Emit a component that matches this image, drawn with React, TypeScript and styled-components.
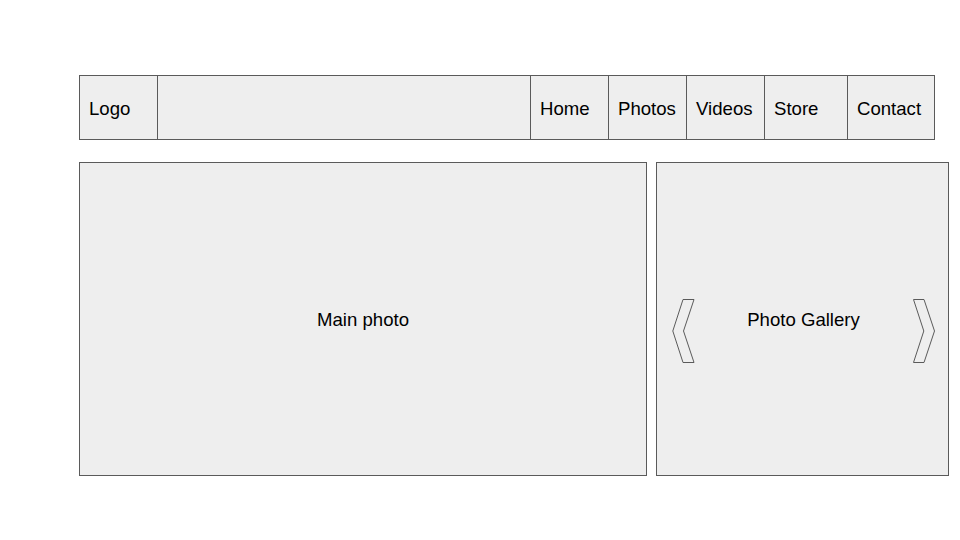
import React from "react";
import styled, { createGlobalStyle } from "styled-components";

const GlobalStyle = createGlobalStyle`
  html, body {
    margin: 0;
    padding: 0;
    background: #ffffff;
  }
  * { box-sizing: border-box; }
  body {
    font-family: "Liberation Sans", Arial, sans-serif;
    color: #000000;
  }
`;

const Page = styled.div`
  width: 960px;
  height: 540px;
  padding: 75px 0 0 79px;
  display: flex;
  flex-direction: column;
  gap: 22px;
`;

const NavBar = styled.nav`
  display: flex;
  width: 856px;
  height: 65px;
  border: 1px solid #5a5a5a;
  background: #eeeeee;
`;

const NavCell = styled.div<{ $w?: number; $last?: boolean }>`
  display: flex;
  align-items: center;
  padding: 2px 0 0 9px;
  font-size: 18.6px;
  flex: ${(p) => (p.$w ? `0 0 ${p.$w}px` : "1 1 auto")};
  border-right: ${(p) => (p.$last ? "none" : "1px solid #5a5a5a")};
`;

const Content = styled.div`
  display: flex;
  gap: 9px;
  height: 314px;
`;

const Panel = styled.section<{ $w: number }>`
  width: ${(p) => p.$w}px;
  height: 100%;
  border: 1px solid #5a5a5a;
  background: #eeeeee;
  font-size: 18.6px;
`;

const MainPanel = styled(Panel)`
  display: flex;
  align-items: center;
  justify-content: center;
  padding-top: 1px;
`;

const GalleryPanel = styled(Panel)`
  display: grid;
  grid-template-columns: 1fr auto 1fr;
  align-items: center;
  padding: 1px 12px 0 14px;
`;

const Chevron = styled.svg<{ $end?: boolean }>`
  display: block;
  width: 24px;
  height: 66px;
  margin-top: 22px;
  justify-self: ${(p) => (p.$end ? "end" : "start")};
`;

const GalleryLabel = styled.span`
  text-align: center;
`;

const navItems: { label: string; w: number }[] = [
  { label: "Home", w: 78 },
  { label: "Photos", w: 78 },
  { label: "Videos", w: 78 },
  { label: "Store", w: 83 },
  { label: "Contact", w: 86 },
];

export default function App() {
  return (
    <>
      <GlobalStyle />
      <Page>
        <NavBar>
          <NavCell $w={78}>Logo</NavCell>
          <NavCell />
          {navItems.map((item, i) => (
            <NavCell key={item.label} $w={item.w} $last={i === navItems.length - 1}>
              {item.label}
            </NavCell>
          ))}
        </NavBar>
        <Content>
          <MainPanel $w={568}>Main photo</MainPanel>
          <GalleryPanel $w={293}>
            <Chevron viewBox="0 0 24 66">
              <polygon
                points="12,1.5 23,1.5 12.5,33 23,64.5 12,64.5 1.8,33"
                fill="none"
                stroke="#5a5a5a"
                strokeWidth="1"
              />
            </Chevron>
            <GalleryLabel>Photo Gallery</GalleryLabel>
            <Chevron viewBox="0 0 24 66" $end>
              <polygon
                points="1.5,1.5 12,1.5 22.5,33 12,64.5 1.5,64.5 11.8,33"
                fill="none"
                stroke="#5a5a5a"
                strokeWidth="1"
              />
            </Chevron>
          </GalleryPanel>
        </Content>
      </Page>
    </>
  );
}
